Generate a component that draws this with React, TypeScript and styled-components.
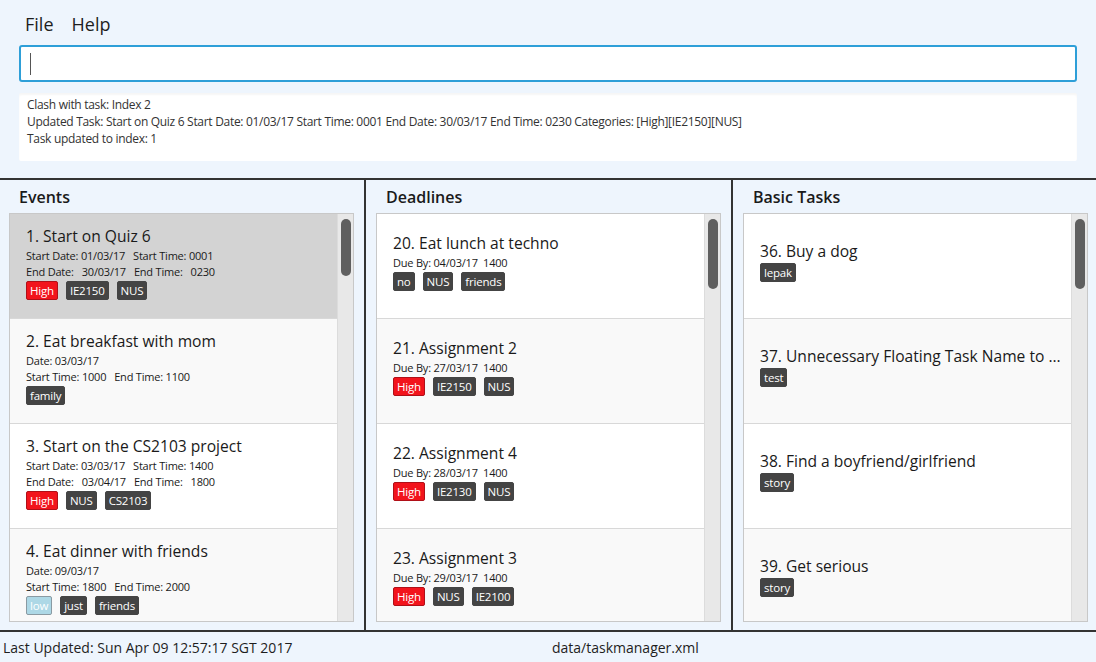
import styled, { createGlobalStyle } from "styled-components";

const GlobalStyle = createGlobalStyle`
  html, body, #root {
    margin: 0;
    padding: 0;
    height: 100%;
  }
  body {
    font-family: "Open Sans", "Noto Sans", sans-serif;
    background: #eef5fd;
    color: #222;
  }
  * {
    box-sizing: border-box;
  }
`;

type Tag = { label: string; kind?: "high" | "low" };
type Task = {
  title: string;
  lines: string[];
  tags: Tag[];
};

const events: Task[] = [
  {
    title: "1. Start on Quiz 6",
    lines: ["Start Date: 01/03/17   Start Time: 0001", "End Date:   30/03/17   End Time:   0230"],
    tags: [{ label: "High", kind: "high" }, { label: "IE2150" }, { label: "NUS" }],
  },
  {
    title: "2. Eat breakfast with mom",
    lines: ["Date: 03/03/17", "Start Time: 1000   End Time: 1100"],
    tags: [{ label: "family" }],
  },
  {
    title: "3. Start on the CS2103 project",
    lines: ["Start Date: 03/03/17   Start Time: 1400", "End Date:   03/04/17   End Time:   1800"],
    tags: [{ label: "High", kind: "high" }, { label: "NUS" }, { label: "CS2103" }],
  },
  {
    title: "4. Eat dinner with friends",
    lines: ["Date: 09/03/17", "Start Time: 1800   End Time: 2000"],
    tags: [{ label: "low", kind: "low" }, { label: "just" }, { label: "friends" }],
  },
];

const deadlines: Task[] = [
  {
    title: "20. Eat lunch at techno",
    lines: ["Due By: 04/03/17  1400"],
    tags: [{ label: "no" }, { label: "NUS" }, { label: "friends" }],
  },
  {
    title: "21. Assignment 2",
    lines: ["Due By: 27/03/17  1400"],
    tags: [{ label: "High", kind: "high" }, { label: "IE2150" }, { label: "NUS" }],
  },
  {
    title: "22. Assignment 4",
    lines: ["Due By: 28/03/17  1400"],
    tags: [{ label: "High", kind: "high" }, { label: "IE2130" }, { label: "NUS" }],
  },
  {
    title: "23. Assignment 3",
    lines: ["Due By: 29/03/17  1400"],
    tags: [{ label: "High", kind: "high" }, { label: "NUS" }, { label: "IE2100" }],
  },
];

const basics: Task[] = [
  { title: "36. Buy a dog", lines: [], tags: [{ label: "lepak" }] },
  { title: "37. Unnecessary Floating Task Name to ...", lines: [], tags: [{ label: "test" }] },
  { title: "38. Find a boyfriend/girlfriend", lines: [], tags: [{ label: "story" }] },
  { title: "39. Get serious", lines: [], tags: [{ label: "story" }] },
];

function TaskList({
  tasks,
  padTop,
  thumb,
  selected,
}: {
  tasks: Task[];
  padTop: number;
  thumb: number;
  selected?: number;
}) {
  return (
    <List>
      <Cards>
        {tasks.map((t, i) => (
          <Card key={t.title} $alt={i % 2 === 1} $selected={selected === i} $padTop={padTop}>
            <CardTitle>{t.title}</CardTitle>
            {t.lines.map((l) => (
              <Detail key={l}>{l}</Detail>
            ))}
            <Tags>
              {t.tags.map((tag) => (
                <TagChip key={tag.label} $kind={tag.kind}>
                  {tag.label}
                </TagChip>
              ))}
            </Tags>
          </Card>
        ))}
      </Cards>
      <Scrollbar>
        <Thumb $height={thumb} />
      </Scrollbar>
    </List>
  );
}

function App() {
  return (
    <>
      <GlobalStyle />
      <Window>
        <MenuBar>
          <MenuItem>File</MenuItem>
          <MenuItem>Help</MenuItem>
        </MenuBar>
        <CommandBox>
          <Caret />
        </CommandBox>
        <ResultBox>
          <div>Clash with task: Index 2</div>
          <div>
            Updated Task: Start on Quiz 6 Start Date: 01/03/17 Start Time: 0001 End Date: 30/03/17 End
            Time: 0230 Categories: [High][IE2150][NUS]
          </div>
          <div>Task updated to index: 1</div>
        </ResultBox>
        <Panels>
          <Column>
            <ColumnTitle>Events</ColumnTitle>
            <TaskList tasks={events} padTop={11} thumb={57} selected={0} />
          </Column>
          <Column>
            <ColumnTitle>Deadlines</ColumnTitle>
            <TaskList tasks={deadlines} padTop={18} thumb={70} />
          </Column>
          <Column>
            <ColumnTitle>Basic Tasks</ColumnTitle>
            <TaskList tasks={basics} padTop={26} thumb={70} />
          </Column>
        </Panels>
        <StatusBar>
          <StatusCell>Last Updated: Sun Apr 09 12:57:17 SGT 2017</StatusCell>
          <StatusCell>data/taskmanager.xml</StatusCell>
        </StatusBar>
      </Window>
    </>
  );
}

export default App;

const Window = styled.div`
  width: 1096px;
  height: 662px;
  display: flex;
  flex-direction: column;
  background: #eef5fd;
  overflow: hidden;
`;

const MenuBar = styled.div`
  height: 45px;
  display: flex;
  align-items: center;
  gap: 18px;
  padding: 3px 0 0 25px;
`;

const MenuItem = styled.span`
  font-size: 18px;
  color: #1e1e1e;
`;

const CommandBox = styled.div`
  margin: 0 19px;
  height: 37px;
  background: #fff;
  border: 2px solid #2e9fd8;
  border-radius: 3px;
  display: flex;
  align-items: center;
  padding-left: 9px;
`;

const Caret = styled.div`
  width: 1px;
  height: 22px;
  background: #555;
`;

const ResultBox = styled.div`
  margin: 11px 19px 0;
  height: 68px;
  background: #fff;
  border-radius: 2px;
  box-shadow: inset 0 2px 2px rgba(0, 0, 0, 0.04);
  padding: 3px 8px;
  font-size: 12px;
  letter-spacing: -0.3px;
  line-height: 17px;
  color: #333;
`;

const Panels = styled.div`
  margin-top: 17px;
  flex: 1;
  display: grid;
  grid-template-columns: 364px 367px 1fr;
  border-top: 2px solid #333;
  border-bottom: 2px solid #333;
  min-height: 0;
`;

const Column = styled.div`
  display: flex;
  flex-direction: column;
  padding: 0 10px 8px 9px;
  min-height: 0;

  & + & {
    border-left: 2px solid #333;
    padding-left: 10px;
  }
`;

const ColumnTitle = styled.div`
  height: 33px;
  display: flex;
  align-items: center;
  padding-left: 10px;
  font-size: 16px;
  font-weight: 600;
  color: #1a1a1a;
`;

const List = styled.div`
  flex: 1;
  width: 345px;
  border: 1px solid #c8c8c8;
  display: flex;
  min-height: 0;
  overflow: hidden;
  background: #fff;
`;

const Cards = styled.div`
  flex: 1;
  min-width: 0;
`;

const Card = styled.div<{ $alt: boolean; $selected: boolean; $padTop: number }>`
  height: 105px;
  padding: ${(p) => p.$padTop}px 10px 0 16px;
  background: ${(p) => (p.$selected ? "#d3d3d3" : p.$alt ? "#f9f9f9" : "#fff")};
  border-bottom: 1px solid #d8d8d8;
  overflow: hidden;
`;

const CardTitle = styled.div`
  font-size: 15.6px;
  line-height: 22px;
  color: #1a1a1a;
  white-space: nowrap;
  overflow: hidden;
  margin-bottom: 1px;
`;

const Detail = styled.div`
  font-size: 11px;
  letter-spacing: -0.2px;
  line-height: 16px;
  color: #1a1a1a;
  white-space: pre;
`;

const Tags = styled.div`
  display: flex;
  gap: 8px;
  margin-top: 1px;
`;

const TagChip = styled.span<{ $kind?: "high" | "low" }>`
  font-size: 11.5px;
  letter-spacing: -0.2px;
  line-height: 17px;
  padding: 0 3px;
  border-radius: 2px;
  color: #fff;
  background: ${(p) => (p.$kind === "high" ? "#f2141c" : p.$kind === "low" ? "#add8e6" : "#444")};
  border: 1px solid ${(p) => (p.$kind === "high" ? "#b01018" : p.$kind === "low" ? "#8a9aa2" : "#444")};
`;

const Scrollbar = styled.div`
  width: 16px;
  background: #e8e8e8;
  border-left: 1px solid #dcdcdc;
  padding: 5px 2px 0 3px;
`;

const Thumb = styled.div<{ $height: number }>`
  height: ${(p) => p.$height}px;
  background: #5f5f5f;
  border-radius: 5px;
`;

const StatusBar = styled.div`
  height: 30px;
  display: grid;
  grid-template-columns: 549px 1fr;
  align-items: center;
`;

const StatusCell = styled.div`
  font-size: 14px;
  color: #1e1e1e;
  padding-left: 3px;
`;
